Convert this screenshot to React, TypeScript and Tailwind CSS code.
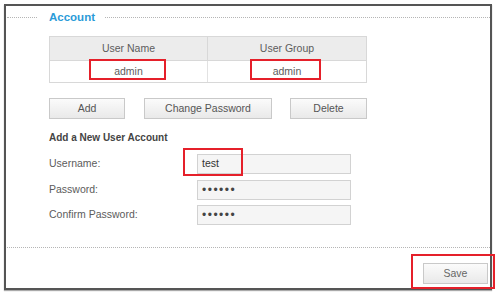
export default function App() {
  const font = { fontFamily: '"Liberation Sans", Arial, sans-serif' };
  const btn =
    'h-[21px] flex items-center justify-center border border-[#c9c9c9] bg-gradient-to-b from-[#fbfbfb] to-[#e9e9e9] text-[10.5px] text-[#555]';
  const field = 'h-[20px] w-[154px] border border-[#d2d2d2] bg-[#f5f5f5] flex items-center px-[4px] text-[10.5px] text-[#333]';

  return (
    <div className="relative w-[498px] h-[293px] bg-white pt-[4px] pl-[4px]" style={font}>
      <div className="w-[488px] h-[286px] border-2 border-[#555] flex flex-col shadow-[0_1px_1px_#aaa]">
        <div className="h-[23px] flex items-center">
          <div className="ml-[1px] w-[30px] border-t border-dotted border-[#b5b5b5]" />
          <span className="ml-[12px] text-[11.5px] font-bold text-[#2b9bd8]">Account</span>
          <div className="ml-[10px] flex-1 border-t border-dotted border-[#b5b5b5]" />
        </div>

        <div className="ml-[43px] mt-[7px] w-[318px] border border-[#d8d8d8] text-[10.5px] text-[#5c5c5c]">
          <div className="grid grid-cols-2 h-[23px] bg-[#ececec]">
            <div className="flex items-center justify-center border-r border-[#d8d8d8]">User Name</div>
            <div className="flex items-center justify-center">User Group</div>
          </div>
          <div className="grid grid-cols-2 h-[22px] border-t border-[#d8d8d8] bg-white">
            <div className="flex items-center justify-center border-r border-[#e2e2e2]">admin</div>
            <div className="flex items-center justify-center">admin</div>
          </div>
        </div>

        <div className="ml-[43px] mt-[15px] flex">
          <div className={`${btn} w-[76px]`}>Add</div>
          <div className={`${btn} w-[128px] ml-[19px]`}>Change Password</div>
          <div className={`${btn} w-[77px] ml-[18px]`}>Delete</div>
        </div>

        <div className="ml-[43px] mt-[13px] text-[10px] font-bold text-[#444] leading-[12px]">
          Add a New User Account
        </div>

        <div className="ml-[43px] mt-[10px] flex flex-col text-[10.5px] text-[#5c5c5c]">
          <div className="flex items-center h-[20px]">
            <span className="w-[148px]">Username:</span>
            <div className={field}>test</div>
          </div>
          <div className="flex items-center h-[20px] mt-[6px]">
            <span className="w-[148px]">Password:</span>
            <div className={field}>
              <span className="text-[12px] tracking-[1.5px] text-[#444]">••••••</span>
            </div>
          </div>
          <div className="flex items-center h-[20px] mt-[5px]">
            <span className="w-[148px]">Confirm Password:</span>
            <div className={field}>
              <span className="text-[12px] tracking-[1.5px] text-[#444]">••••••</span>
            </div>
          </div>
        </div>

        <div className="mt-[22px] ml-[1px] border-t border-dotted border-[#b5b5b5]" />

        <div className="mt-[15px] self-end mr-[2px]">
          <div className={`${btn} w-[65px] text-[#666]`}>Save</div>
        </div>
      </div>

      <div className="absolute left-[89px] top-[59px] w-[77px] h-[21px] border-2 border-[#e5202a]" />
      <div className="absolute left-[250px] top-[59px] w-[71px] h-[21px] border-2 border-[#e5202a]" />
      <div className="absolute left-[183px] top-[148px] w-[60px] h-[28px] border-2 border-[#e5202a]" />
      <div className="absolute left-[411px] top-[254px] w-[84px] h-[35px] border-2 border-[#e5202a]" />
    </div>
  );
}
